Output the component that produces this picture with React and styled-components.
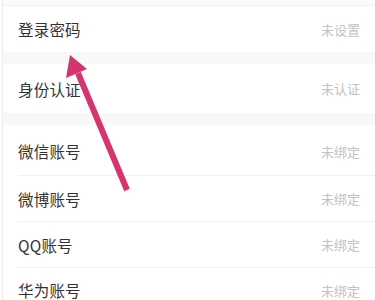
import React from "react";
import styled, { createGlobalStyle } from "styled-components";

const Global = createGlobalStyle`
  html, body { margin: 0; padding: 0; background: #fff; }
  body { font-family: "Noto Sans CJK SC", "Noto Sans", sans-serif; }
`;

const Page = styled.div`
  position: relative;
  width: 375px;
  height: 300px;
  overflow: hidden;
  background: #fff;
  box-sizing: border-box;
  border-left: 1px solid #ececec;
  margin-left: 2px;
`;

const TopSpace = styled.div`
  height: 5px;
  background: #fbfbfb;
  border-bottom: 1px solid #f1f1f1;
`;

const Band = styled.div`
  height: ${(p) => p.$h}px;
  background: #f8f8f8;
`;

const Row = styled.div`
  display: flex;
  align-items: center;
  justify-content: space-between;
  height: ${(p) => p.$h}px;
  padding: ${(p) => p.$pt || 0}px 17px 0 15px;
  box-sizing: border-box;
  background: #fff;
`;

const Label = styled.span`
  font-size: 15.5px;
  color: #333;
  letter-spacing: 0.2px;
`;

const Status = styled.span`
  font-size: 13px;
  color: #c2c2c2;
`;

const Divider = styled.div`
  height: 1px;
  margin-left: 15px;
  background: #f0f0f0;
`;

const ArrowLayer = styled.svg`
  position: absolute;
  left: -3px;
  top: 0;
  pointer-events: none;
`;

export default function App() {
  return (
    <>
      <Global />
      <Page>
        <TopSpace />
        <Row $h={46}>
          <Label>登录密码</Label>
          <Status>未设置</Status>
        </Row>
        <Band $h={12} />
        <Row $h={49}>
          <Label>身份认证</Label>
          <Status>未认证</Status>
        </Row>
        <Band $h={12} />
        <Row $h={50} $pt={2}>
          <Label>微信账号</Label>
          <Status>未绑定</Status>
        </Row>
        <Divider />
        <Row $h={45}>
          <Label>微博账号</Label>
          <Status>未绑定</Status>
        </Row>
        <Divider />
        <Row $h={45}>
          <Label>QQ账号</Label>
          <Status>未绑定</Status>
        </Row>
        <Divider />
        <Row $h={44}>
          <Label>华为账号</Label>
          <Status>未绑定</Status>
        </Row>
        <ArrowLayer width="375" height="300" viewBox="0 0 375 300">
          <line x1="127" y1="190" x2="78" y2="73" stroke="#d5356f" strokeWidth="6" strokeLinecap="butt" />
          <polygon points="70,55 66,78 87,69" fill="#d5356f" />
        </ArrowLayer>
      </Page>
    </>
  );
}
